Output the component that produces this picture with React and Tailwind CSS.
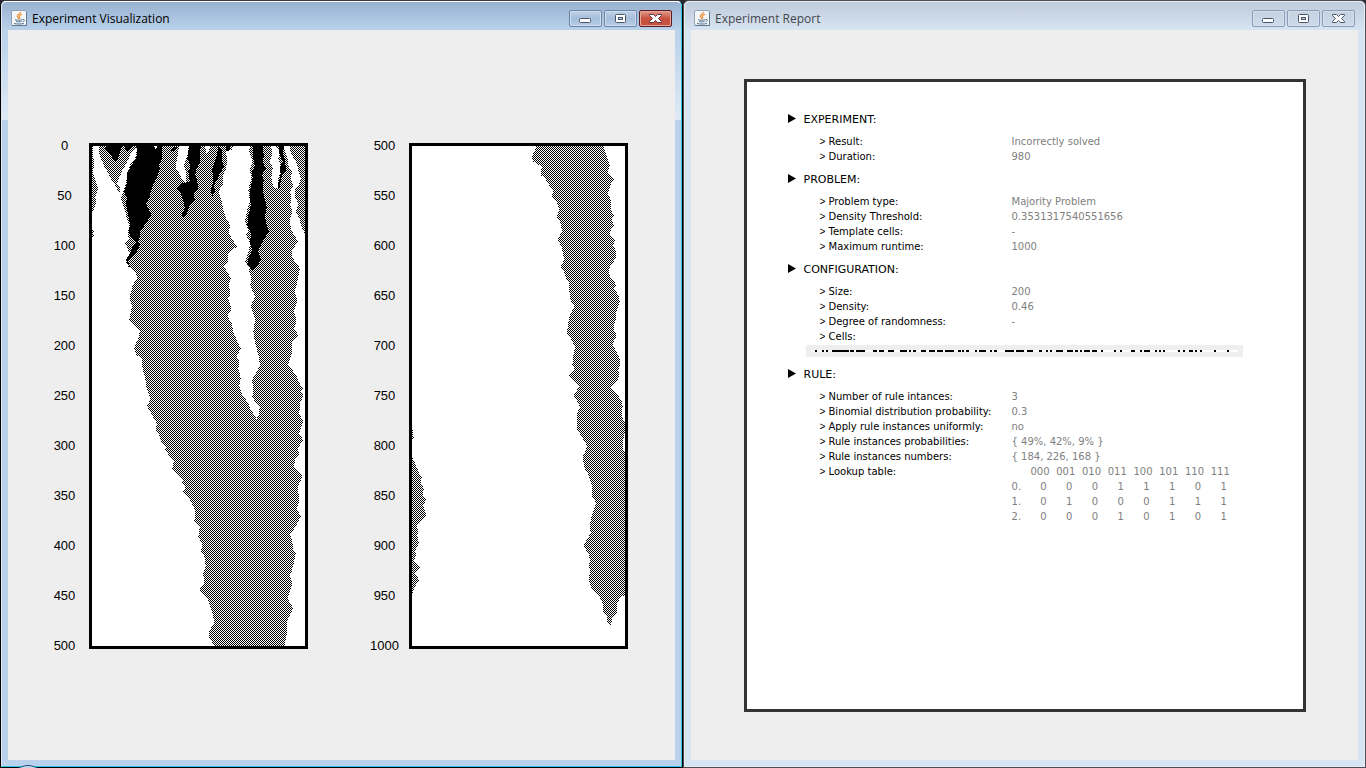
import React from 'react';

// Plot outlines are traced on a grid of 3 units per cell, 639 x 1500 units, origin at 156,33
const PLOT_VIEWBOX = '156 33 639 1500';

const FIRST_PLOT = [
  // mixed domain, left strip
  ['checker', '156,33 160,33 158,60 164,85 158,110 168,140 174,160 166,185 168,205 160,225 156,231'],
  ['checker', '156,285 162,287 158,294 162,302 156,306'],
  // small triangle next to the strip
  ['checker', '178,33 176,55 185,75 195,98 205,115 213,133 222,145 232,165 239,173 240,160 232,145 245,110 262,80 270,60 290,33'],
  // main mixed domain
  [
    'checker',
    '290,33 290,45 288,65 270,90 262,120 258,145 250,170 243,190 250,215 258,235 260,250 268,275 262,300 268,310 256,325 266,350 272,360 258,380 265,395 280,405 293,425 278,450 268,490 276,515 268,555 285,575 300,590 294,610 283,640 290,660 305,672 308,700 315,730 320,760 332,795 320,810 330,830 342,850 350,865 348,885 360,905 362,920 378,935 375,945 390,965 402,980 396,1000 412,1015 430,1035 425,1045 437,1055 430,1070 445,1085 455,1105 465,1125 463,1160 480,1173 475,1205 488,1230 482,1245 495,1270 497,1295 490,1315 492,1345 478,1365 500,1385 512,1420 520,1445 524,1465 508,1485 508,1510 525,1533 733,1533 740,1500 742,1455 760,1420 743,1390 758,1345 750,1320 755,1310 768,1255 760,1245 757,1220 750,1200 770,1170 782,1145 770,1120 778,1095 773,1055 788,1023 762,995 765,975 778,955 773,940 790,915 778,895 790,860 778,835 780,805 790,780 780,770 790,760 775,740 768,720 745,690 757,650 755,620 775,600 762,580 770,555 762,530 772,500 765,470 772,440 780,400 758,370 755,345 776,320 762,300 752,280 750,250 758,230 750,210 755,190 750,170 760,150 752,130 758,110 742,90 745,75 738,60 730,33',
  ],
  // right strip
  ['checker', '748,33 755,60 765,75 772,95 782,130 775,150 765,165 765,185 775,210 768,230 778,250 785,275 795,300 795,33'],
  // white domains
  ['white', '418,33 410,75 408,100 418,115 428,135 437,140 437,110 432,90 442,60 446,33'],
  ['white', '494,33 500,55 508,45 512,33'],
  [
    'white',
    '578,33 575,45 557,50 562,70 558,100 550,120 548,150 535,170 545,195 550,225 560,255 572,270 566,290 575,310 590,335 565,355 565,380 552,395 560,410 574,430 565,450 572,475 565,490 575,520 562,545 575,565 580,590 588,610 602,640 590,665 598,680 595,700 602,730 598,750 605,775 625,805 630,820 640,835 650,853 657,835 659,815 645,800 637,785 640,760 635,735 648,715 660,690 655,660 645,620 640,590 645,555 632,515 645,485 630,450 635,430 625,405 630,395 615,380 625,355 630,325 618,300 625,285 615,260 622,225 630,200 625,165 630,145 635,130 628,100 638,85 632,65 627,50 630,33',
  ],
  ['white', '694,33 697,60 690,80 698,100 694,130 700,155 712,160 718,150 712,130 722,115 722,90 715,70 720,50 708,33'],
  // black domains
  ['black', '205,33 245,33 238,60 228,82 215,65 200,50 190,40'],
  ['black', '252,33 282,33 270,42 262,48 256,40'],
  [
    'black',
    '286,33 367,33 365,75 355,95 360,100 350,130 338,150 332,170 328,190 316,205 325,220 334,240 318,265 300,290 298,310 292,322 300,330 290,350 275,365 265,380 270,398 258,375 270,355 278,335 290,322 270,300 265,285 272,270 265,245 262,225 257,205 262,190 252,170 262,145 260,115 272,95 290,65 292,45',
  ],
  ['black', '392,50 402,36 416,36 404,48'],
  [
    'black',
    '448,33 482,33 480,80 470,100 465,120 472,140 475,160 460,180 465,195 448,215 440,235 430,250 425,240 435,220 430,200 425,180 410,160 425,145 450,140 445,110 452,95 442,70',
  ],
  ['black', '535,33 545,45 545,75 552,95 540,115 528,140 520,150 526,165 518,183 512,170 520,140 517,105 522,90 530,65'],
  ['black', '556,42 562,33 572,33 568,42 562,48'],
  [
    'black',
    '640,33 668,33 672,65 668,80 677,100 665,120 672,135 668,155 672,185 680,215 675,245 680,270 687,290 670,315 660,335 655,350 662,375 650,395 638,405 622,388 625,370 638,345 628,320 635,300 622,270 625,240 632,215 630,170 638,130 635,110 645,95 638,65',
  ],
  ['black', '715,33 732,33 728,55 735,75 738,105 725,125 720,150 716,165 714,145 722,120 720,95 728,80 718,55'],
  // white gap beside the thin black domain
  ['white', '736,36 748,33 755,60 765,75 772,95 782,130 775,150 765,165 765,185 775,210 768,230 778,250 785,275 795,300 776,318 762,300 752,280 750,250 758,230 750,210 755,190 750,170 760,150 752,130 758,110 742,90 745,75 740,60'],
  ['white', '342,33 352,33 348,44'],
];

const SECOND_PLOT = [
  [
    'checker',
    '530,33 525,45 515,65 520,80 545,95 542,120 555,130 570,155 580,165 575,185 590,200 597,225 590,245 602,265 607,290 592,312 605,335 613,375 602,395 612,410 618,430 628,445 628,470 632,495 643,515 628,545 620,595 630,605 645,635 640,660 637,690 645,705 627,720 645,740 658,755 640,780 650,795 660,815 650,835 652,885 668,910 682,935 668,965 672,995 685,1020 690,1035 697,1055 695,1080 708,1105 695,1140 690,1170 692,1195 680,1215 670,1233 685,1255 690,1275 687,1295 690,1310 685,1335 695,1360 715,1380 728,1405 730,1430 740,1445 742,1460 752,1470 757,1450 772,1435 772,1405 780,1390 795,1378 795,950 788,945 790,915 795,890 795,865 785,840 788,815 785,800 770,775 752,760 772,735 778,720 775,705 782,680 770,650 758,630 770,600 760,580 768,550 770,525 780,500 775,480 762,460 770,450 750,425 745,410 750,395 768,370 767,345 758,330 768,315 748,300 752,285 762,270 755,255 763,240 752,225 755,195 743,180 752,150 762,132 742,112 750,90 738,60 730,33',
  ],
  [
    'checker',
    '156,965 165,985 172,1000 178,1015 188,1027 180,1040 192,1060 188,1080 198,1095 190,1110 200,1142 180,1160 170,1170 175,1185 172,1200 176,1225 165,1250 170,1263 160,1275 182,1297 165,1315 178,1335 165,1355 160,1370 156,1375',
  ],
  ['checker', '156,883 160,890 158,900 161,907 156,913'],
];

// Initial configuration: start and length of every run of live cells
const CELL_RUNS = [
  [12, 7], [32, 6], [44, 6], [64, 51], [118, 11], [136, 25], [185, 14], [205, 13], [232, 17],
  [268, 20], [293, 8], [307, 7], [331, 14], [353, 18], [378, 18], [403, 26], [442, 7], [454, 6],
  [466, 7], [492, 7], [505, 20], [538, 6], [550, 7], [583, 26], [615, 24], [647, 19], [685, 7],
  [704, 7], [717, 7], [735, 20], [768, 19], [793, 7], [806, 8], [820, 18], [843, 14], [871, 6],
  [909, 6], [928, 6], [961, 11], [986, 6], [999, 19], [1031, 6], [1044, 6], [1057, 6], [1102, 6],
  [1115, 6], [1133, 14], [1153, 6], [1166, 6], [1210, 6], [1249, 6],
];

const SECTIONS = [
  {
    title: 'EXPERIMENT:',
    rows: [
      ['Result:', 'Incorrectly solved'],
      ['Duration:', '980'],
    ],
  },
  {
    title: 'PROBLEM:',
    rows: [
      ['Problem type:', 'Majority Problem'],
      ['Density Threshold:', '0.3531317540551656'],
      ['Template cells:', '-'],
      ['Maximum runtime:', '1000'],
    ],
  },
  {
    title: 'CONFIGURATION:',
    rows: [
      ['Size:', '200'],
      ['Density:', '0.46'],
      ['Degree of randomness:', '-'],
      ['Cells:', ''],
    ],
    cells: true,
  },
  {
    title: 'RULE:',
    rows: [
      ['Number of rule intances:', '3'],
      ['Binomial distribution probability:', '0.3'],
      ['Apply rule instances uniformly:', 'no'],
      ['Rule instances probabilities:', '{ 49%, 42%, 9% }'],
      ['Rule instances numbers:', '{ 184, 226, 168 }'],
      ['Lookup table:', <LookupTable key="lookup" />],
    ],
  },
];

function JavaIcon() {
  return (
    <svg className="size-4 shrink-0" viewBox="0 0 16 16" aria-hidden="true">
      <rect x="0.5" y="0.5" width="15" height="15" rx="1.5" fill="#f4f6f8" stroke="#8fa3b5" />
      <path d="M1 15.5h14.5V2" fill="none" stroke="#5f7a90" />
      <path d="M9.5 2c.6 1.6-3.400 2.500-3.200 4.200.1 1 1.200 1.500 1.400 2.600M11 4.300c-1.800.6-3 1.400-2.600 2.500.3.7.8 1 .1 2" fill="none" stroke="#ee8a2b" strokeWidth="1.200" />
      <path d="M4 9.700c2 .7 5.500.7 7.500 0M5 11.500c1.600.5 4 .5 5.500 0M3 13.500c3 .7 7 .7 10 0M11.500 9.500c2.500-.6 2.400 1.800.2 2.300" fill="none" stroke="#52738f" />
    </svg>
  );
}

function ControlGlyph({ kind, ink }) {
  if (kind === 'Minimize') {
    return <rect x="10.500" y="8.500" width="11" height="4" rx="1" fill="#fff" stroke={ink} />;
  }
  if (kind === 'Maximize') {
    return (
      <g stroke={ink}>
        <rect x="11.500" y="4.500" width="10" height="8" rx="1" fill="#fff" />
        <rect x="14.500" y="7.500" width="4" height="2" fill="#b9cbe0" />
      </g>
    );
  }
  return (
    <path
      d="M10.500 4.500h4l2 2 2-2h4v1l-3 3 3 3v1h-4l-2-2-2 2h-4v-1l3-3-3-3z"
      fill="#fff"
      stroke={ink}
      strokeLinejoin="round"
    />
  );
}

function WindowControls({ active }) {
  return (
    <div className="flex gap-0.5">
      {['Minimize', 'Maximize', 'Close'].map((kind) => {
        const red = active && kind === 'Close';
        return (
          <button
            key={kind}
            type="button"
            aria-label={kind}
            className={`h-[17px] w-[33px] overflow-hidden rounded-[2px] border ${
              red
                ? 'border-[#5a1a22] bg-linear-to-b from-[#e09a8e] via-[#c8513f] via-50% to-[#c4523c] shadow-[inset_0_0_0_1px_#e5a79c]'
                : active
                  ? 'border-[#6c86a8] bg-linear-to-b from-[#c0d2e6] via-[#a5bedb] via-50% to-[#b6cde6] shadow-[inset_0_0_0_1px_#cfdeee]'
                  : 'border-[#8a9cba] bg-linear-to-b from-[#c5d2e0] to-[#ccdaea] shadow-[inset_0_0_0_1px_#d5e0ec]'
            }`}
          >
            <svg className="-ml-px -mt-px h-[17px] w-[33px] max-w-none" viewBox="0 0 33 17" aria-hidden="true">
              <ControlGlyph kind={kind} ink={red ? '#5f3540' : '#4a5568'} />
            </svg>
          </button>
        );
      })}
    </div>
  );
}

function Window({ title, active, children }) {
  return (
    <section
      className={`flex min-w-0 flex-1 flex-col rounded-t-[6px] border ${
        active
          ? 'border-t-[#3a3a44] border-r-black border-b-black border-l-black bg-[#b9d1ea]'
          : 'border-[#4c4c52] bg-[#d7e4f2]'
      }`}
    >
      <div
        className={`flex flex-1 flex-col rounded-t-[5px] border ${
          active
            ? 'border-t-white border-r-[#27c8e0] border-b-[#27c8e0] border-l-[#dce8f4] bg-[linear-gradient(#b9d1ea_28px,#dfe9f5_118px,#b9d1ea_118px)]'
            : 'border-[#e6eef7]'
        }`}
      >
        <header
          className={`flex h-7 shrink-0 items-center rounded-t-[5px] pl-[9px] pr-[9px] pt-1 ${
            active
              ? 'bg-linear-to-b from-[#98b1d0] to-[#b9d1ea]'
              : 'bg-linear-to-b from-[#bfcbda] to-[#d7e4f2]'
          }`}
        >
          <JavaIcon />
          <h1
            className={`ml-[5px] mt-0.5 flex-1 truncate font-['Open_Sans','Noto_Sans',sans-serif] text-[12px] leading-4 ${
              active ? 'text-black' : 'text-[#44474d]'
            }`}
          >
            {title}
          </h1>
          <WindowControls active={active} />
        </header>
        <div className="mx-1.5 mb-1.5 flex flex-1 items-center justify-center bg-[#eeeeee]">{children}</div>
      </div>
    </section>
  );
}

function Plot({ id, from, shapes }) {
  const fills = { checker: `url(#${id})`, white: '#fff', black: '#000' };
  const labels = Array.from({ length: 11 }, (_, i) => from + i * 50);

  return (
    <figure className="flex items-center gap-1">
      <div className="w-10 text-center font-['Liberation_Sans',Arial,sans-serif] text-[13px] text-black">
        {labels.map((label) => (
          <div key={label} className="h-[50px] leading-[50px]">
            {label}
          </div>
        ))}
      </div>
      <div className="border-3 border-black bg-white">
        <svg
          className="h-[500px] w-[213px]"
          viewBox={PLOT_VIEWBOX}
          shapeRendering="crispEdges"
          role="img"
          aria-label={`Generations ${from} to ${from + 500}`}
        >
          <defs>
            <pattern id={id} x="156" y="33" width="6" height="6" patternUnits="userSpaceOnUse">
              <rect width="6" height="6" fill="#fff" />
              <path d="M0 0h3v3H0zM3 3h3v3H3z" fill="#000" />
            </pattern>
          </defs>
          {shapes.map(([fill, points]) => (
            <polygon key={points} points={points} fill={fills[fill]} />
          ))}
        </svg>
      </div>
    </figure>
  );
}

function LookupTable() {
  const inputs = ['000', '001', '010', '011', '100', '101', '110', '111'];
  const outputs = ['00011101', '01000111', '00010101'];

  return (
    <table className="w-[225px] table-fixed">
      <thead>
        <tr>
          <td className="w-[19px] p-0" />
          {inputs.map((input) => (
            <th key={input} scope="col" className="p-0 text-left font-normal">
              {input}
            </th>
          ))}
        </tr>
      </thead>
      <tbody>
        {outputs.map((bits, i) => (
          <tr key={bits}>
            <th scope="row" className="p-0 text-left font-normal">
              {i}.
            </th>
            {bits.split('').map((bit, j) => (
              <td key={inputs[j]} className="p-0 text-center">
                {bit}
              </td>
            ))}
          </tr>
        ))}
      </tbody>
    </table>
  );
}

function CellStrip() {
  return (
    <div className="ml-[18px] flex h-[15px] items-center">
      <div className="bg-[#eeeeee] p-[5px]">
        <svg
          className="h-0.5 w-[427px]"
          viewBox="0 0 1281 6"
          preserveAspectRatio="none"
          shapeRendering="crispEdges"
          role="img"
          aria-label="Cells"
        >
          <rect width="1281" height="6" fill="#fff" />
          {CELL_RUNS.map(([start, length]) => (
            <rect key={start} x={start} width={length} height="6" fill="#000" />
          ))}
        </svg>
      </div>
    </div>
  );
}

function ReportSection({ title, rows, cells }) {
  return (
    <section>
      <h2 className="flex h-[30px] items-center text-[11px] text-black">
        <svg className="mr-2 h-[9px] w-2" viewBox="0 0 8 9" aria-hidden="true">
          <path d="M0 0l8 4.500L0 9z" fill="#000" />
        </svg>
        <span className="mt-[3px]">{title}</span>
      </h2>
      {rows.map(([label, value]) => (
        <div key={label} className="flex text-[10px] leading-[15px]">
          <div className="ml-8 flex w-48 shrink-0 text-black">
            <span className="w-[9px] font-['Liberation_Sans',Arial,sans-serif]">&gt;</span>
            <span>{label}</span>
          </div>
          <div className="text-[#808080]">{value}</div>
        </div>
      ))}
      {cells && <CellStrip />}
    </section>
  );
}

export default function App() {
  return (
    <main className="relative flex min-h-screen overflow-hidden bg-[#2a2a30]">
      <Window title="Experiment Visualization" active>
        <div className="flex gap-[57px] pr-[11px] pt-0.5">
          <Plot id="checker-first" from={0} shapes={FIRST_PLOT} />
          <Plot id="checker-second" from={500} shapes={SECOND_PLOT} />
        </div>
      </Window>
      <Window title="Experiment Report">
        <article className="min-h-[633px] w-[562px] border-3 border-[#333333] bg-white pl-[41px] pt-[22px] font-['DejaVu_Sans',Verdana,sans-serif]">
          {SECTIONS.map((section) => (
            <ReportSection key={section.title} {...section} />
          ))}
        </article>
      </Window>
      {/* top of the start button */}
      <div className="absolute -bottom-[33px] left-[10px] size-9 rounded-full border border-[#1d4a7a] bg-[#c5d9ea]" />
    </main>
  );
}
